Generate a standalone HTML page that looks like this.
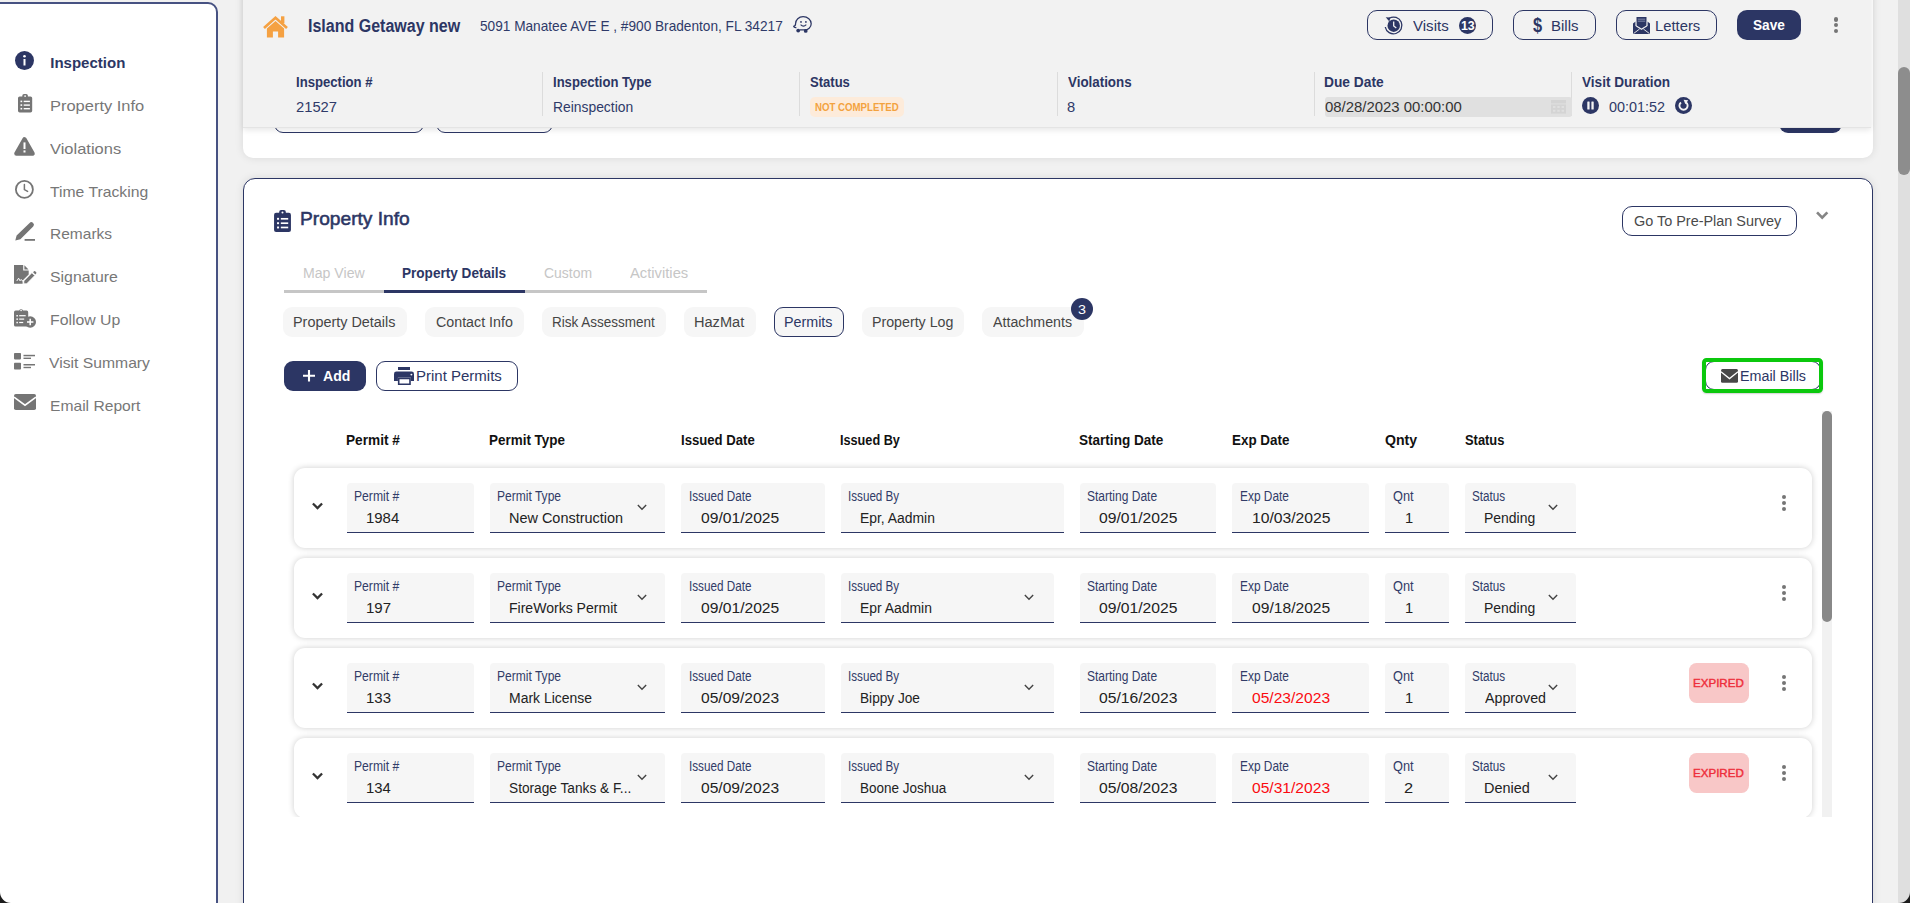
<!DOCTYPE html>
<html><head><meta charset="utf-8"><title>Inspection</title>
<style>
html,body{margin:0;padding:0;}
html{overflow:hidden;}
body{width:1910px;height:903px;overflow:hidden;background:#f1f1f1;font-family:"Liberation Sans",sans-serif;}
#w{position:relative;width:1910px;height:903px;overflow:hidden;background:#f1f1f1;}
.b{position:absolute;box-sizing:border-box;}
.t{position:absolute;white-space:nowrap;transform-origin:0 0;}
svg{overflow:visible;}
</style></head><body><div id="w">
<div class="b" style="left:-2px;top:2px;width:220px;height:910px;background:#fff;border:2px solid #475282;border-top-right-radius:10px;"></div>
<span class="t" style="left:50.29px;top:53px;font-size:15px;line-height:19px;color:#2c3664;font-weight:bold;">Inspection</span>
<span class="t" style="left:50.00px;top:96px;font-size:15px;line-height:19px;color:#777777;transform:scaleX(1.0969);">Property Info</span>
<span class="t" style="left:50.00px;top:139px;font-size:15px;line-height:19px;color:#777777;transform:scaleX(1.0980);">Violations</span>
<span class="t" style="left:50.40px;top:182px;font-size:15px;line-height:19px;color:#777777;transform:scaleX(1.0484);">Time Tracking</span>
<span class="t" style="left:50.04px;top:224px;font-size:15px;line-height:19px;color:#777777;transform:scaleX(1.0344);">Remarks</span>
<span class="t" style="left:49.93px;top:267px;font-size:15px;line-height:19px;color:#777777;transform:scaleX(1.0580);">Signature</span>
<span class="t" style="left:50.14px;top:310px;font-size:15px;line-height:19px;color:#777777;transform:scaleX(1.0543);">Follow Up</span>
<span class="t" style="left:49.00px;top:353px;font-size:15px;line-height:19px;color:#777777;transform:scaleX(1.0472);">Visit Summary</span>
<span class="t" style="left:50.08px;top:396px;font-size:15px;line-height:19px;color:#777777;transform:scaleX(1.0421);">Email Report</span>
<svg class="b" style="left:15.2px;top:50.8px;" width="19" height="19" viewBox="0 0 19 19" ><circle cx="9.5" cy="9.5" r="9.5" fill="#2c3664"/><rect x="8.5" y="8" width="2" height="6.5" fill="#fff"/><circle cx="9.5" cy="5.2" r="1.3" fill="#fff"/></svg>
<svg class="b" style="left:18px;top:94.3px;" width="14.2" height="18.5" viewBox="0 0 14.2 18.5" ><rect x="0" y="2.400" width="14.2" height="16.100" rx="1.700" fill="#757575"/><rect x="4.300" y="0" width="5.600" height="4.600" rx="1.700" fill="#757575"/><circle cx="7.100" cy="2.100" r=".85" fill="#fff"/><g fill="#fff"><rect x="2.500" y="6.600" width="1.700" height="1.600"/><rect x="5.700" y="6.700" width="6.200" height="1.400"/><rect x="2.500" y="10.300" width="1.700" height="1.600"/><rect x="5.700" y="10.400" width="6.200" height="1.400"/><rect x="2.500" y="13.900" width="1.700" height="1.600"/><rect x="5.700" y="14.000" width="6.200" height="1.400"/></g></svg>
<svg class="b" style="left:14.1px;top:137px;" width="21" height="18.8" viewBox="0 0 21 18.8" ><path d="M10.5 2.300L18.600 16.500H2.400Z" fill="#757575" stroke="#757575" stroke-width="4.400" stroke-linejoin="round"/><rect x="9.500" y="5.400" width="2" height="6.600" fill="#fff"/><rect x="9.500" y="13.400" width="2" height="2.100" fill="#fff"/></svg>
<svg class="b" style="left:15.1px;top:180px;" width="18.8" height="18.8" viewBox="0 0 18.8 18.8" ><circle cx="9.4" cy="9.4" r="8.5" fill="none" stroke="#757575" stroke-width="1.8"/><path d="M9.4 4.4V9.6L12.6 11.4" fill="none" stroke="#757575" stroke-width="1.5" stroke-linecap="round"/></svg>
<svg class="b" style="left:15px;top:222px;" width="20" height="19" viewBox="0 0 20 19" ><path d="M0.3 18.6 L1.6 13.4 L14.6 0.9 A2.3 2.3 0 0 1 17.9 0.8 L18.3 1.2 A2.3 2.3 0 0 1 18.2 4.4 L5.4 17.3 Z" fill="#757575"/><rect x="9.6" y="17" width="10.4" height="1.8" fill="#757575"/></svg>
<svg class="b" style="left:14px;top:265px;" width="21.5" height="18.8" viewBox="0 0 21.5 18.8" ><path d="M0 0H9.200V5.600H14.700V9.400L8.600 15.500V18.800H0Z" fill="#757575"/><path d="M10.4 0.300L14.500 4.400H10.400Z" fill="#757575"/><path d="M9.800 15.900L17.900 7.700L20.800 10.600L12.700 18.800H9.800Z" fill="#757575" stroke="#fff" stroke-width=".8"/><path d="M19.100 7.200L20.000 6.300A0.900 0.900 0 0 1 21.200 6.300L22.200 7.300A0.900 0.900 0 0 1 22.200 8.500L21.300 9.400Z" fill="#757575"/><path d="M2.800 16.000L4.600 13.200L6.000 15.800L7.200 14.400L8.200 15.800H9.800" fill="none" stroke="#fff" stroke-width="1"/></svg>
<svg class="b" style="left:14px;top:308px;" width="22" height="20" viewBox="0 0 22 20" ><path d="M1.6 2.6h3.6a2 2 0 0 1 3.800 0H12.600a1.600 1.600 0 0 1 1.600 1.600V16.900a1.600 1.600 0 0 1-1.600 1.600H1.600A1.600 1.600 0 0 1 0 16.900V4.200A1.600 1.600 0 0 1 1.600 2.600z" fill="#757575"/><circle cx="7.100" cy="2.500" r=".8" fill="#fff"/><g fill="#fff"><rect x="2.400" y="7" width="1.500" height="1.500"/><rect x="5.200" y="7.100" width="6.500" height="1.200"/><rect x="2.400" y="10.400" width="1.500" height="1.500"/><rect x="5.200" y="10.500" width="5" height="1.200"/><rect x="2.400" y="13.800" width="1.500" height="1.500"/><rect x="5.200" y="13.900" width="4" height="1.200"/></g><circle cx="16.200" cy="14.000" r="5.800" fill="#757575" stroke="#fff" stroke-width="0"/><path d="M16.200 10.800V17.200M13.000 14.000H19.400" stroke="#fff" stroke-width="1.500"/></svg>
<svg class="b" style="left:14px;top:353.2px;" width="21" height="16.6" viewBox="0 0 21 16.6" ><g fill="#757575"><rect x="0" y="0" width="7" height="6.400" rx=".8"/><rect x="0" y="9.800" width="7" height="6.800" rx=".8"/><rect x="9.500" y="1.800" width="11.500" height="1.500"/><rect x="9.500" y="4.600" width="7.500" height="1.400"/><rect x="9.500" y="11.000" width="11.500" height="1.500"/><rect x="9.500" y="13.800" width="7.500" height="1.400"/></g></svg>
<svg class="b" style="left:14px;top:394px;" width="22" height="16" viewBox="0 0 22 16" ><rect x="0" y="0" width="22" height="16" rx="1.8" fill="#757575"/><path d="M0 3.200L11 11.200L22 3.200" fill="none" stroke="#fff" stroke-width="1.600"/></svg>
<div class="b" style="left:243px;top:-10px;width:1630px;height:168px;background:#fff;border-radius:0 0 10px 10px;box-shadow:0 0 8px rgba(0,0,0,.10);"></div>
<div class="b" style="left:274px;top:102px;width:149.6px;height:30.6px;border:1px solid #2c3664;border-radius:9px;background:#fff;"></div>
<div class="b" style="left:436px;top:102px;width:117.4px;height:30.6px;border:1px solid #2c3664;border-radius:9px;background:#fff;"></div>
<div class="b" style="left:1779px;top:102px;width:63px;height:30.6px;border-radius:9px;background:#2c3664;"></div>
<div class="b" style="left:243px;top:-10px;width:1628px;height:138px;background:#f2f2f2;border-bottom:1px solid #e4e4e4;box-shadow:0 2px 6px rgba(0,0,0,.10);"></div>
<svg class="b" style="left:263px;top:15.6px;" width="25" height="21.4" viewBox="0 0 25 21.4" ><path d="M1.000 11.900L12.500 1.700L24.000 11.900" fill="none" stroke="#f5a142" stroke-width="2.700"/><rect x="18.000" y="0.300" width="3.400" height="7.000" fill="#f5a142"/><path d="M12.500 5.000L3.900 12.600V21.400H9.900V15.400H15.100V21.400H21.100V12.600Z" fill="#f5a142"/></svg>
<span class="t" style="left:307.65px;top:15px;font-size:18px;line-height:22px;color:#2c3664;font-weight:bold;transform:scaleX(0.8897);">Island Getaway new</span>
<span class="t" style="left:480.19px;top:16px;font-size:15px;line-height:19px;color:#2f3a69;transform:scaleX(0.9098);">5091 Manatee AVE E , #900 Bradenton, FL 34217</span>
<svg class="b" style="left:793px;top:16px;" width="19" height="17" viewBox="0 0 19 17" ><path d="M3.4 11.600C1.400 11.800 .800 10.900 .700 10.400C2.300 10.200 2.600 9.000 2.600 7.600C2.600 3.700 5.800 .700 10.100 .700C14.600 .700 18.200 3.800 18.200 7.700C18.200 11.400 15.000 13.900 11.600 13.900L6.600 13.800" fill="none" stroke="#2c3664" stroke-width="1.250"/><circle cx="5.200" cy="14.600" r="1.900" fill="#2c3664"/><circle cx="12.700" cy="14.900" r="1.900" fill="#2c3664"/><circle cx="8.000" cy="5.900" r=".9" fill="#2c3664"/><circle cx="12.900" cy="5.900" r=".9" fill="#2c3664"/><path d="M7.600 8.700Q10.400 11.400 13.300 8.700" fill="none" stroke="#2c3664" stroke-width="1.100"/></svg>
<div class="b" style="left:1367px;top:10px;width:126px;height:29.6px;border:1px solid #2c3664;border-radius:10px;"></div>
<svg class="b" style="left:1384px;top:15.5px;" width="19" height="19" viewBox="0 0 19 19" ><path d="M5.300 2.200A8.400 8.400 0 1 1 1.250 11.000" fill="none" stroke="#2c3664" stroke-width="1.300"/><path d="M1.700 1.200L6.400 1.500L5.400 5.500Z" fill="#2c3664"/><circle cx="9.700" cy="9.700" r="6.250" fill="#2c3664"/><path d="M9.700 5.600V9.900L12.300 11.900" fill="none" stroke="#f2f2f2" stroke-width="1.300"/></svg>
<span class="t" style="left:1413.40px;top:16px;font-size:15.5px;line-height:19px;color:#2c3664;transform:scaleX(0.9709);">Visits</span>
<div class="b" style="left:1459px;top:17px;width:17px;height:17px;border-radius:50%;background:#2c3664;"></div>
<span class="t" style="left:1461.06px;top:18px;font-size:12px;line-height:16px;color:#fff;font-weight:bold;transform:scaleX(1.0291);">13</span>
<div class="b" style="left:1513px;top:10px;width:83px;height:29.6px;border:1px solid #2c3664;border-radius:10px;"></div>
<span class="t" style="left:1533.30px;top:13px;font-size:19.5px;line-height:24px;color:#2c3664;font-weight:bold;transform:scaleX(0.8408);">$</span>
<span class="t" style="left:1551.14px;top:16px;font-size:15.5px;line-height:19px;color:#2c3664;transform:scaleX(0.9677);">Bills</span>
<div class="b" style="left:1616px;top:10px;width:100.6px;height:29.6px;border:1px solid #2c3664;border-radius:10px;"></div>
<svg class="b" style="left:1633px;top:17px;" width="17" height="17" viewBox="0 0 17 17" ><path d="M0 6.600L2.600 4.600V9.000L8.500 12.700L14.400 9.000V4.600L17 6.600V17H0Z" fill="#2c3664"/><path d="M3.500 0H13.500V8.500L8.500 11.600L3.500 8.500Z" fill="#2c3664"/><rect x="4.800" y="1.700" width="7.400" height=".9" fill="#8d94b3"/><rect x="4.800" y="3.700" width="7.400" height=".9" fill="#8d94b3"/><path d="M0.500 16.600L6.600 12.000M16.500 16.600L10.400 12.000" stroke="#f2f2f2" stroke-width=".9"/><path d="M2.900 4.400V9.000L8.500 12.500L14.100 9.000V4.400" fill="none" stroke="#f2f2f2" stroke-width=".55"/></svg>
<span class="t" style="left:1655.11px;top:16px;font-size:15.5px;line-height:19px;color:#2c3664;transform:scaleX(0.9544);">Letters</span>
<div class="b" style="left:1737px;top:10px;width:64px;height:29.6px;border-radius:10px;background:#2c3664;"></div>
<span class="t" style="left:1752.53px;top:15px;font-size:15.5px;line-height:19px;color:#fff;font-weight:bold;transform:scaleX(0.8803);">Save</span>
<div class="b" style="left:1833.7px;top:17.1px;width:4.6px;height:4.6px;border-radius:50%;background:#757575;"></div>
<div class="b" style="left:1833.7px;top:22.9px;width:4.6px;height:4.6px;border-radius:50%;background:#757575;"></div>
<div class="b" style="left:1833.7px;top:28.7px;width:4.6px;height:4.6px;border-radius:50%;background:#757575;"></div>
<div class="b" style="left:542px;top:72.4px;width:1px;height:44px;background:#dcdcdc;"></div>
<div class="b" style="left:799px;top:72.4px;width:1px;height:44px;background:#dcdcdc;"></div>
<div class="b" style="left:1057px;top:72.4px;width:1px;height:44px;background:#dcdcdc;"></div>
<div class="b" style="left:1314px;top:72.4px;width:1px;height:44px;background:#dcdcdc;"></div>
<div class="b" style="left:1571px;top:72.4px;width:1px;height:44px;background:#dcdcdc;"></div>
<span class="t" style="left:295.54px;top:73px;font-size:14.5px;line-height:18px;color:#2c3664;font-weight:bold;transform:scaleX(0.9049);">Inspection #</span>
<span class="t" style="left:295.68px;top:98px;font-size:14.5px;line-height:18px;color:#2f3a69;transform:scaleX(1.0176);">21527</span>
<span class="t" style="left:553.13px;top:73px;font-size:14.5px;line-height:18px;color:#2c3664;font-weight:bold;transform:scaleX(0.9018);">Inspection Type</span>
<span class="t" style="left:552.91px;top:98px;font-size:14.5px;line-height:18px;color:#2f3a69;transform:scaleX(0.9560);">Reinspection</span>
<span class="t" style="left:809.93px;top:73px;font-size:14.5px;line-height:18px;color:#2c3664;font-weight:bold;transform:scaleX(0.8998);">Status</span>
<div class="b" style="left:810px;top:97.4px;width:94px;height:19.2px;border-radius:5px;background:#fdebda;"></div>
<span class="t" style="left:814.53px;top:101px;font-size:10px;line-height:13px;color:#f3a23e;font-weight:bold;transform:scaleX(0.9655);">NOT COMPLETED</span>
<span class="t" style="left:1067.60px;top:73px;font-size:14.5px;line-height:18px;color:#2c3664;font-weight:bold;transform:scaleX(0.9215);">Violations</span>
<span class="t" style="left:1067.28px;top:98px;font-size:14.5px;line-height:18px;color:#2f3a69;transform:scaleX(1.0134);">8</span>
<span class="t" style="left:1323.91px;top:73px;font-size:14.5px;line-height:18px;color:#2c3664;font-weight:bold;transform:scaleX(0.9488);">Due Date</span>
<div class="b" style="left:1325px;top:97.4px;width:246.6px;height:19.2px;background:#e0e0e0;border-radius:3px;"></div>
<span class="t" style="left:1324.94px;top:97px;font-size:15px;line-height:19px;color:#333;transform:scaleX(0.9942);">08/28/2023 00:00:00</span>
<svg class="b" style="left:1551px;top:100px;" width="15" height="13.6" viewBox="0 0 15 13.6" ><g fill="#d4d4d4"><rect x="0" y="0" width="15" height="3.400"/><rect x="0" y="4.400" width="15" height="9.200"/></g><g fill="#e0e0e0"><rect x="2" y="6" width="2.400" height="2"/><rect x="6.300" y="6" width="2.400" height="2"/><rect x="10.600" y="6" width="2.400" height="2"/><rect x="2" y="9.800" width="2.400" height="2"/><rect x="6.300" y="9.800" width="2.400" height="2"/><rect x="10.600" y="9.800" width="2.400" height="2"/></g></svg>
<span class="t" style="left:1582.00px;top:73px;font-size:14.5px;line-height:18px;color:#2c3664;font-weight:bold;transform:scaleX(0.9377);">Visit Duration</span>
<svg class="b" style="left:1582px;top:97px;" width="17" height="17" viewBox="0 0 17 17" ><circle cx="8.500" cy="8.500" r="8.500" fill="#2c3664"/><rect x="5.300" y="4.600" width="2.300" height="7.800" rx=".5" fill="#f2f2f2"/><rect x="9.400" y="4.600" width="2.300" height="7.800" rx=".5" fill="#f2f2f2"/></svg>
<span class="t" style="left:1608.79px;top:98px;font-size:14.5px;line-height:18px;color:#2f3a69;transform:scaleX(0.9918);">00:01:52</span>
<svg class="b" style="left:1675px;top:97px;" width="17" height="17" viewBox="0 0 17 17" ><circle cx="8.500" cy="8.500" r="8.500" fill="#2c3664"/><path d="M10.900 5.300A4.100 4.100 0 1 1 6.000 5.400" fill="none" stroke="#f2f2f2" stroke-width="1.900"/><path d="M8.600 2.700L13.200 3.300L10.400 7.300Z" fill="#f2f2f2"/></svg>
<div class="b" style="left:1898px;top:0px;width:12px;height:903px;background:#dfdfdf;"></div>
<div class="b" style="left:1898px;top:67px;width:12px;height:108px;background:#8d8d8d;border-radius:6px;"></div>
<div class="b" style="left:243px;top:178px;width:1630px;height:760px;background:#fff;border:1px solid #2c3664;border-radius:12px;box-shadow:0 0 8px rgba(0,0,0,.10);"></div>
<svg class="b" style="left:274px;top:210px;" width="17" height="22" viewBox="0 0 14.2 18.5" ><rect x="0" y="2.400" width="14.2" height="16.100" rx="1.700" fill="#2c3664"/><rect x="4.300" y="0" width="5.600" height="4.600" rx="1.700" fill="#2c3664"/><circle cx="7.100" cy="2.100" r=".85" fill="#fff"/><g fill="#fff"><rect x="2.500" y="6.600" width="1.700" height="1.600"/><rect x="5.700" y="6.700" width="6.200" height="1.400"/><rect x="2.500" y="10.300" width="1.700" height="1.600"/><rect x="5.700" y="10.400" width="6.200" height="1.400"/><rect x="2.500" y="13.900" width="1.700" height="1.600"/><rect x="5.700" y="14.000" width="6.200" height="1.400"/></g></svg>
<span class="t" style="left:300.20px;top:207px;font-size:19px;line-height:23px;color:#2c3664;transform:scaleX(1.0085);-webkit-text-stroke:0.55px #2c3664;">Property Info</span>
<div class="b" style="left:1622px;top:205.6px;width:175px;height:30.6px;border:1px solid #2c3664;border-radius:10px;background:#fff;"></div>
<span class="t" style="left:302.91px;top:264px;font-size:14px;line-height:18px;color:#c6c6c6;transform:scaleX(1.0075);">Map View</span>
<span class="t" style="left:402.28px;top:264px;font-size:14px;line-height:18px;color:#2c3664;font-weight:bold;transform:scaleX(0.9694);">Property Details</span>
<span class="t" style="left:544.00px;top:264px;font-size:14px;line-height:18px;color:#c6c6c6;transform:scaleX(0.9963);">Custom</span>
<span class="t" style="left:630.40px;top:264px;font-size:14px;line-height:18px;color:#c6c6c6;transform:scaleX(1.0545);">Activities</span>
<div class="b" style="left:284px;top:290px;width:423px;height:2.6px;background:#c6c6c6;"></div>
<div class="b" style="left:384px;top:289.6px;width:141px;height:3px;background:#2c3664;"></div>
<div class="b" style="left:283px;top:307px;width:124px;height:30px;background:#f6f6f6;border-radius:9px;"></div>
<span class="t" style="left:293.29px;top:313px;font-size:14px;line-height:18px;color:#454545;transform:scaleX(1.0287);">Property Details</span>
<div class="b" style="left:425px;top:307px;width:99px;height:30px;background:#f6f6f6;border-radius:9px;"></div>
<span class="t" style="left:435.95px;top:313px;font-size:14px;line-height:18px;color:#454545;transform:scaleX(1.0176);">Contact Info</span>
<div class="b" style="left:542px;top:307px;width:124px;height:30px;background:#f6f6f6;border-radius:9px;"></div>
<span class="t" style="left:552.26px;top:313px;font-size:14px;line-height:18px;color:#454545;transform:scaleX(0.9634);">Risk Assessment</span>
<div class="b" style="left:684px;top:307px;width:72px;height:30px;background:#f6f6f6;border-radius:9px;"></div>
<span class="t" style="left:694.29px;top:313px;font-size:14px;line-height:18px;color:#454545;transform:scaleX(1.0407);">HazMat</span>
<div class="b" style="left:774px;top:307px;width:70px;height:30px;background:#f6f6f6;border-radius:9px;border:1px solid #2c3664;"></div>
<span class="t" style="left:784.16px;top:313px;font-size:14px;line-height:18px;color:#2c3664;transform:scaleX(1.0221);">Permits</span>
<div class="b" style="left:862px;top:307px;width:102px;height:30px;background:#f6f6f6;border-radius:9px;"></div>
<span class="t" style="left:872.31px;top:313px;font-size:14px;line-height:18px;color:#454545;transform:scaleX(1.0152);">Property Log</span>
<div class="b" style="left:982px;top:307px;width:102px;height:30px;background:#f6f6f6;border-radius:9px;"></div>
<span class="t" style="left:993.41px;top:313px;font-size:14px;line-height:18px;color:#454545;transform:scaleX(1.0151);">Attachments</span>
<div class="b" style="left:1071px;top:298px;width:22px;height:22px;border-radius:50%;background:#2c3664;"></div>
<span class="t" style="left:1077.87px;top:301px;font-size:13px;line-height:17px;color:#fff;transform:scaleX(1.1036);">3</span>
<div class="b" style="left:284px;top:361px;width:82px;height:30px;background:#2c3664;border-radius:9px;"></div>
<svg class="b" style="left:303px;top:370px;" width="12" height="11.6" viewBox="0 0 12 11.6" ><path d="M6 0V11.600M0 5.800H12" stroke="#fff" stroke-width="2.100"/></svg>
<span class="t" style="left:322.74px;top:366px;font-size:15.5px;line-height:19px;color:#fff;font-weight:bold;transform:scaleX(0.9066);">Add</span>
<div class="b" style="left:376px;top:361px;width:142px;height:30px;background:#fff;border:1px solid #2c3664;border-radius:9px;"></div>
<svg class="b" style="left:394px;top:367px;" width="20" height="18" viewBox="0 0 20 18" ><rect x="4.000" y="0" width="12.000" height="3.000" fill="#2c3664"/><path d="M2.400 4.500H17.600A2.400 2.400 0 0 1 20 6.900V14.000H16.800V10.600H3.900V14.000H0V6.900A2.400 2.400 0 0 1 2.400 4.500Z" fill="#2c3664"/><path d="M4.700 11.400H16.000V17.200H4.700Z" fill="none" stroke="#2c3664" stroke-width="1.600"/><circle cx="17.400" cy="7.600" r=".95" fill="#fff"/></svg>
<span class="t" style="left:416.29px;top:366px;font-size:15.5px;line-height:19px;color:#2c3664;transform:scaleX(0.9673);">Print Permits</span>
<span class="t" style="left:1634.28px;top:211px;font-size:15.5px;line-height:19px;color:#4a4a4a;transform:scaleX(0.9303);">Go To Pre-Plan Survey</span>
<svg class="b" style="left:1816px;top:211px;" width="12.4" height="8" viewBox="0 0 12 7.4" ><path d="M1 1.200L6 6.200L11 1.200" fill="none" stroke="#858585" stroke-width="2.6" stroke-linecap="butt" stroke-linejoin="miter"/></svg>
<div class="b" style="left:1705px;top:361px;width:115.5px;height:29px;background:#fff;border:1px solid #2c3664;border-radius:9px;"></div>
<div class="b" style="left:1702.2px;top:358.2px;width:120.6px;height:34.5px;border:4px solid #0bc80d;border-radius:4.500px;box-shadow:0 1px 1.500px rgba(0,0,0,.18);"></div>
<svg class="b" style="left:1721px;top:369px;" width="17" height="13.8" viewBox="0 0 22 16" preserveAspectRatio="none"><rect x="0" y="0" width="22" height="16" rx="1.8" fill="#484848"/><path d="M0 3.200L11 11.200L22 3.200" fill="none" stroke="#fff" stroke-width="1.600"/></svg>
<span class="t" style="left:1739.85px;top:366px;font-size:15.5px;line-height:19px;color:#2c3664;transform:scaleX(0.9229);">Email Bills</span>
<div class="b" style="left:1822px;top:411px;width:10px;height:406px;background:#f1f1f1;"></div>
<div class="b" style="left:1822px;top:411px;width:10px;height:211px;background:#888;border-radius:5px;"></div>
<span class="t" style="left:346.26px;top:431px;font-size:14px;line-height:18px;color:#111;font-weight:bold;transform:scaleX(0.9755);">Permit #</span>
<span class="t" style="left:489.30px;top:431px;font-size:14px;line-height:18px;color:#111;font-weight:bold;transform:scaleX(0.9607);">Permit Type</span>
<span class="t" style="left:681.13px;top:431px;font-size:14px;line-height:18px;color:#111;font-weight:bold;transform:scaleX(0.9388);">Issued Date</span>
<span class="t" style="left:839.77px;top:431px;font-size:14px;line-height:18px;color:#111;font-weight:bold;transform:scaleX(0.9056);">Issued By</span>
<span class="t" style="left:1078.93px;top:431px;font-size:14px;line-height:18px;color:#111;font-weight:bold;transform:scaleX(0.9676);">Starting Date</span>
<span class="t" style="left:1231.64px;top:431px;font-size:14px;line-height:18px;color:#111;font-weight:bold;transform:scaleX(0.9578);">Exp Date</span>
<span class="t" style="left:1385.17px;top:431px;font-size:14px;line-height:18px;color:#111;font-weight:bold;transform:scaleX(1.0092);">Qnty</span>
<span class="t" style="left:1464.61px;top:431px;font-size:14px;line-height:18px;color:#111;font-weight:bold;transform:scaleX(0.9199);">Status</span>
<div class="b" style="left:284px;top:411px;width:1538px;height:406px;overflow:hidden;">
<div class="b" style="left:10px;top:57px;width:1518px;height:80px;background:#fff;border-radius:11px;box-shadow:0 0 6px rgba(0,0,0,.2);"></div>
<svg class="b" style="left:28px;top:91.4px;" width="11" height="7.6" viewBox="0 0 12 7.4" ><path d="M1 1.200L6 6.200L11 1.200" fill="none" stroke="#333" stroke-width="2.5" stroke-linecap="butt" stroke-linejoin="miter"/></svg>
<div class="b" style="left:63px;top:72px;width:127px;height:50px;background:#f6f6f6;border-radius:4px 4px 0 0;border-bottom:1.500px solid #2c3664;"></div>
<div class="b" style="left:206px;top:72px;width:175px;height:50px;background:#f6f6f6;border-radius:4px 4px 0 0;border-bottom:1.500px solid #2c3664;"></div>
<div class="b" style="left:397px;top:72px;width:144px;height:50px;background:#f6f6f6;border-radius:4px 4px 0 0;border-bottom:1.500px solid #2c3664;"></div>
<div class="b" style="left:557px;top:72px;width:223px;height:50px;background:#f6f6f6;border-radius:4px 4px 0 0;border-bottom:1.500px solid #2c3664;"></div>
<div class="b" style="left:796px;top:72px;width:136px;height:50px;background:#f6f6f6;border-radius:4px 4px 0 0;border-bottom:1.500px solid #2c3664;"></div>
<div class="b" style="left:948px;top:72px;width:137px;height:50px;background:#f6f6f6;border-radius:4px 4px 0 0;border-bottom:1.500px solid #2c3664;"></div>
<div class="b" style="left:1101px;top:72px;width:64px;height:50px;background:#f6f6f6;border-radius:4px 4px 0 0;border-bottom:1.500px solid #2c3664;"></div>
<div class="b" style="left:1181px;top:72px;width:111px;height:50px;background:#f6f6f6;border-radius:4px 4px 0 0;border-bottom:1.500px solid #2c3664;"></div>
<span class="t" style="left:69.70px;top:76px;font-size:14px;line-height:18px;color:#323c68;transform:scaleX(0.8680);">Permit #</span>
<span class="t" style="left:213.33px;top:76px;font-size:14px;line-height:18px;color:#323c68;transform:scaleX(0.8601);">Permit Type</span>
<span class="t" style="left:404.65px;top:76px;font-size:14px;line-height:18px;color:#323c68;transform:scaleX(0.8368);">Issued Date</span>
<span class="t" style="left:564.21px;top:76px;font-size:14px;line-height:18px;color:#323c68;transform:scaleX(0.8325);">Issued By</span>
<span class="t" style="left:803.40px;top:76px;font-size:14px;line-height:18px;color:#323c68;transform:scaleX(0.8581);">Starting Date</span>
<span class="t" style="left:956.01px;top:76px;font-size:14px;line-height:18px;color:#323c68;transform:scaleX(0.8496);">Exp Date</span>
<span class="t" style="left:1109.08px;top:76px;font-size:14px;line-height:18px;color:#323c68;transform:scaleX(0.9117);">Qnt</span>
<span class="t" style="left:1187.99px;top:76px;font-size:14px;line-height:18px;color:#323c68;transform:scaleX(0.8347);">Status</span>
<span class="t" style="left:82.44px;top:97px;font-size:15.5px;line-height:19px;color:#222;transform:scaleX(0.9628);">1984</span>
<span class="t" style="left:225.45px;top:97px;font-size:15.5px;line-height:19px;color:#222;transform:scaleX(0.9324);">New Construction</span>
<span class="t" style="left:417.35px;top:97px;font-size:15.5px;line-height:19px;color:#222;transform:scaleX(1.0088);">09/01/2025</span>
<span class="t" style="left:576.18px;top:97px;font-size:15.5px;line-height:19px;color:#222;transform:scaleX(0.8962);">Epr, Aadmin</span>
<span class="t" style="left:814.93px;top:97px;font-size:15.5px;line-height:19px;color:#222;transform:scaleX(1.0110);">09/01/2025</span>
<span class="t" style="left:967.88px;top:97px;font-size:15.5px;line-height:19px;color:#222;transform:scaleX(1.0123);">10/03/2025</span>
<span class="t" style="left:1120.93px;top:97px;font-size:15.5px;line-height:19px;color:#222;transform:scaleX(0.9474);">1</span>
<span class="t" style="left:1200.44px;top:97px;font-size:15.5px;line-height:19px;color:#222;transform:scaleX(0.8996);">Pending</span>
<svg class="b" style="left:353px;top:93px;" width="10" height="6.4" viewBox="0 0 12 7.4" ><path d="M1 1.200L6 6.200L11 1.200" fill="none" stroke="#444" stroke-width="1.7" stroke-linecap="butt" stroke-linejoin="miter"/></svg>
<svg class="b" style="left:1264px;top:93px;" width="10" height="6.4" viewBox="0 0 12 7.4" ><path d="M1 1.200L6 6.200L11 1.200" fill="none" stroke="#444" stroke-width="1.7" stroke-linecap="butt" stroke-linejoin="miter"/></svg>
<div class="b" style="left:1497.8px;top:83.8px;width:4.4px;height:4.4px;border-radius:50%;background:#757575;"></div>
<div class="b" style="left:1497.8px;top:89.8px;width:4.4px;height:4.4px;border-radius:50%;background:#757575;"></div>
<div class="b" style="left:1497.8px;top:95.8px;width:4.4px;height:4.4px;border-radius:50%;background:#757575;"></div>
<div class="b" style="left:10px;top:147px;width:1518px;height:80px;background:#fff;border-radius:11px;box-shadow:0 0 6px rgba(0,0,0,.2);"></div>
<svg class="b" style="left:28px;top:181.4px;" width="11" height="7.6" viewBox="0 0 12 7.4" ><path d="M1 1.200L6 6.200L11 1.200" fill="none" stroke="#333" stroke-width="2.5" stroke-linecap="butt" stroke-linejoin="miter"/></svg>
<div class="b" style="left:63px;top:162px;width:127px;height:50px;background:#f6f6f6;border-radius:4px 4px 0 0;border-bottom:1.500px solid #2c3664;"></div>
<div class="b" style="left:206px;top:162px;width:175px;height:50px;background:#f6f6f6;border-radius:4px 4px 0 0;border-bottom:1.500px solid #2c3664;"></div>
<div class="b" style="left:397px;top:162px;width:144px;height:50px;background:#f6f6f6;border-radius:4px 4px 0 0;border-bottom:1.500px solid #2c3664;"></div>
<div class="b" style="left:557px;top:162px;width:213px;height:50px;background:#f6f6f6;border-radius:4px 4px 0 0;border-bottom:1.500px solid #2c3664;"></div>
<div class="b" style="left:796px;top:162px;width:136px;height:50px;background:#f6f6f6;border-radius:4px 4px 0 0;border-bottom:1.500px solid #2c3664;"></div>
<div class="b" style="left:948px;top:162px;width:137px;height:50px;background:#f6f6f6;border-radius:4px 4px 0 0;border-bottom:1.500px solid #2c3664;"></div>
<div class="b" style="left:1101px;top:162px;width:64px;height:50px;background:#f6f6f6;border-radius:4px 4px 0 0;border-bottom:1.500px solid #2c3664;"></div>
<div class="b" style="left:1181px;top:162px;width:111px;height:50px;background:#f6f6f6;border-radius:4px 4px 0 0;border-bottom:1.500px solid #2c3664;"></div>
<span class="t" style="left:69.70px;top:166px;font-size:14px;line-height:18px;color:#323c68;transform:scaleX(0.8680);">Permit #</span>
<span class="t" style="left:213.33px;top:166px;font-size:14px;line-height:18px;color:#323c68;transform:scaleX(0.8601);">Permit Type</span>
<span class="t" style="left:404.65px;top:166px;font-size:14px;line-height:18px;color:#323c68;transform:scaleX(0.8368);">Issued Date</span>
<span class="t" style="left:564.21px;top:166px;font-size:14px;line-height:18px;color:#323c68;transform:scaleX(0.8325);">Issued By</span>
<span class="t" style="left:803.40px;top:166px;font-size:14px;line-height:18px;color:#323c68;transform:scaleX(0.8581);">Starting Date</span>
<span class="t" style="left:956.01px;top:166px;font-size:14px;line-height:18px;color:#323c68;transform:scaleX(0.8496);">Exp Date</span>
<span class="t" style="left:1109.08px;top:166px;font-size:14px;line-height:18px;color:#323c68;transform:scaleX(0.9117);">Qnt</span>
<span class="t" style="left:1187.99px;top:166px;font-size:14px;line-height:18px;color:#323c68;transform:scaleX(0.8347);">Status</span>
<span class="t" style="left:81.96px;top:187px;font-size:15.5px;line-height:19px;color:#222;transform:scaleX(0.9684);">197</span>
<span class="t" style="left:225.46px;top:187px;font-size:15.5px;line-height:19px;color:#222;transform:scaleX(0.9059);">FireWorks Permit</span>
<span class="t" style="left:417.35px;top:187px;font-size:15.5px;line-height:19px;color:#222;transform:scaleX(1.0088);">09/01/2025</span>
<span class="t" style="left:576.31px;top:187px;font-size:15.5px;line-height:19px;color:#222;transform:scaleX(0.8980);">Epr Aadmin</span>
<span class="t" style="left:814.93px;top:187px;font-size:15.5px;line-height:19px;color:#222;transform:scaleX(1.0110);">09/01/2025</span>
<span class="t" style="left:968.35px;top:187px;font-size:15.5px;line-height:19px;color:#222;transform:scaleX(1.0088);">09/18/2025</span>
<span class="t" style="left:1120.93px;top:187px;font-size:15.5px;line-height:19px;color:#222;transform:scaleX(0.9474);">1</span>
<span class="t" style="left:1200.44px;top:187px;font-size:15.5px;line-height:19px;color:#222;transform:scaleX(0.8996);">Pending</span>
<svg class="b" style="left:353px;top:183px;" width="10" height="6.4" viewBox="0 0 12 7.4" ><path d="M1 1.200L6 6.200L11 1.200" fill="none" stroke="#444" stroke-width="1.7" stroke-linecap="butt" stroke-linejoin="miter"/></svg>
<svg class="b" style="left:1264px;top:183px;" width="10" height="6.4" viewBox="0 0 12 7.4" ><path d="M1 1.200L6 6.200L11 1.200" fill="none" stroke="#444" stroke-width="1.7" stroke-linecap="butt" stroke-linejoin="miter"/></svg>
<svg class="b" style="left:740px;top:183px;" width="10" height="6.4" viewBox="0 0 12 7.4" ><path d="M1 1.200L6 6.200L11 1.200" fill="none" stroke="#444" stroke-width="1.7" stroke-linecap="butt" stroke-linejoin="miter"/></svg>
<div class="b" style="left:1497.8px;top:173.8px;width:4.4px;height:4.4px;border-radius:50%;background:#757575;"></div>
<div class="b" style="left:1497.8px;top:179.8px;width:4.4px;height:4.4px;border-radius:50%;background:#757575;"></div>
<div class="b" style="left:1497.8px;top:185.8px;width:4.4px;height:4.4px;border-radius:50%;background:#757575;"></div>
<div class="b" style="left:10px;top:237px;width:1518px;height:80px;background:#fff;border-radius:11px;box-shadow:0 0 6px rgba(0,0,0,.2);"></div>
<svg class="b" style="left:28px;top:271.4px;" width="11" height="7.6" viewBox="0 0 12 7.4" ><path d="M1 1.200L6 6.200L11 1.200" fill="none" stroke="#333" stroke-width="2.5" stroke-linecap="butt" stroke-linejoin="miter"/></svg>
<div class="b" style="left:63px;top:252px;width:127px;height:50px;background:#f6f6f6;border-radius:4px 4px 0 0;border-bottom:1.500px solid #2c3664;"></div>
<div class="b" style="left:206px;top:252px;width:175px;height:50px;background:#f6f6f6;border-radius:4px 4px 0 0;border-bottom:1.500px solid #2c3664;"></div>
<div class="b" style="left:397px;top:252px;width:144px;height:50px;background:#f6f6f6;border-radius:4px 4px 0 0;border-bottom:1.500px solid #2c3664;"></div>
<div class="b" style="left:557px;top:252px;width:213px;height:50px;background:#f6f6f6;border-radius:4px 4px 0 0;border-bottom:1.500px solid #2c3664;"></div>
<div class="b" style="left:796px;top:252px;width:136px;height:50px;background:#f6f6f6;border-radius:4px 4px 0 0;border-bottom:1.500px solid #2c3664;"></div>
<div class="b" style="left:948px;top:252px;width:137px;height:50px;background:#f6f6f6;border-radius:4px 4px 0 0;border-bottom:1.500px solid #2c3664;"></div>
<div class="b" style="left:1101px;top:252px;width:64px;height:50px;background:#f6f6f6;border-radius:4px 4px 0 0;border-bottom:1.500px solid #2c3664;"></div>
<div class="b" style="left:1181px;top:252px;width:111px;height:50px;background:#f6f6f6;border-radius:4px 4px 0 0;border-bottom:1.500px solid #2c3664;"></div>
<span class="t" style="left:69.70px;top:256px;font-size:14px;line-height:18px;color:#323c68;transform:scaleX(0.8680);">Permit #</span>
<span class="t" style="left:213.33px;top:256px;font-size:14px;line-height:18px;color:#323c68;transform:scaleX(0.8601);">Permit Type</span>
<span class="t" style="left:404.65px;top:256px;font-size:14px;line-height:18px;color:#323c68;transform:scaleX(0.8368);">Issued Date</span>
<span class="t" style="left:564.21px;top:256px;font-size:14px;line-height:18px;color:#323c68;transform:scaleX(0.8325);">Issued By</span>
<span class="t" style="left:803.40px;top:256px;font-size:14px;line-height:18px;color:#323c68;transform:scaleX(0.8581);">Starting Date</span>
<span class="t" style="left:956.01px;top:256px;font-size:14px;line-height:18px;color:#323c68;transform:scaleX(0.8496);">Exp Date</span>
<span class="t" style="left:1109.08px;top:256px;font-size:14px;line-height:18px;color:#323c68;transform:scaleX(0.9117);">Qnt</span>
<span class="t" style="left:1187.99px;top:256px;font-size:14px;line-height:18px;color:#323c68;transform:scaleX(0.8347);">Status</span>
<span class="t" style="left:81.97px;top:277px;font-size:15.5px;line-height:19px;color:#222;transform:scaleX(0.9663);">133</span>
<span class="t" style="left:224.99px;top:277px;font-size:15.5px;line-height:19px;color:#222;transform:scaleX(0.9007);">Mark License</span>
<span class="t" style="left:417.29px;top:277px;font-size:15.5px;line-height:19px;color:#222;transform:scaleX(1.0063);">05/09/2023</span>
<span class="t" style="left:576.06px;top:277px;font-size:15.5px;line-height:19px;color:#222;transform:scaleX(0.8799);">Bippy Joe</span>
<span class="t" style="left:815.21px;top:277px;font-size:15.5px;line-height:19px;color:#222;transform:scaleX(1.0113);">05/16/2023</span>
<span class="t" style="left:968.29px;top:277px;font-size:15.5px;line-height:19px;color:#fb0a10;transform:scaleX(1.0063);">05/23/2023</span>
<span class="t" style="left:1120.93px;top:277px;font-size:15.5px;line-height:19px;color:#222;transform:scaleX(0.9474);">1</span>
<span class="t" style="left:1201.40px;top:277px;font-size:15.5px;line-height:19px;color:#222;transform:scaleX(0.9189);">Approved</span>
<svg class="b" style="left:353px;top:273px;" width="10" height="6.4" viewBox="0 0 12 7.4" ><path d="M1 1.200L6 6.200L11 1.200" fill="none" stroke="#444" stroke-width="1.7" stroke-linecap="butt" stroke-linejoin="miter"/></svg>
<svg class="b" style="left:1264px;top:273px;" width="10" height="6.4" viewBox="0 0 12 7.4" ><path d="M1 1.200L6 6.200L11 1.200" fill="none" stroke="#444" stroke-width="1.7" stroke-linecap="butt" stroke-linejoin="miter"/></svg>
<svg class="b" style="left:740px;top:273px;" width="10" height="6.4" viewBox="0 0 12 7.4" ><path d="M1 1.200L6 6.200L11 1.200" fill="none" stroke="#444" stroke-width="1.7" stroke-linecap="butt" stroke-linejoin="miter"/></svg>
<div class="b" style="left:1405px;top:252.1px;width:60px;height:39.8px;background:#f8c7c7;border-radius:7.500px;"></div>
<span class="t" style="left:1409.23px;top:265px;font-size:10.9px;line-height:14px;color:#ee2d3a;transform:scaleX(1.0618);-webkit-text-stroke:0.4px #ee2d3a;">EXPIRED</span>
<div class="b" style="left:1497.8px;top:263.8px;width:4.4px;height:4.4px;border-radius:50%;background:#757575;"></div>
<div class="b" style="left:1497.8px;top:269.8px;width:4.4px;height:4.4px;border-radius:50%;background:#757575;"></div>
<div class="b" style="left:1497.8px;top:275.8px;width:4.4px;height:4.4px;border-radius:50%;background:#757575;"></div>
<div class="b" style="left:10px;top:327px;width:1518px;height:80px;background:#fff;border-radius:11px;box-shadow:0 0 6px rgba(0,0,0,.2);"></div>
<svg class="b" style="left:28px;top:361.4px;" width="11" height="7.6" viewBox="0 0 12 7.4" ><path d="M1 1.200L6 6.200L11 1.200" fill="none" stroke="#333" stroke-width="2.5" stroke-linecap="butt" stroke-linejoin="miter"/></svg>
<div class="b" style="left:63px;top:342px;width:127px;height:50px;background:#f6f6f6;border-radius:4px 4px 0 0;border-bottom:1.500px solid #2c3664;"></div>
<div class="b" style="left:206px;top:342px;width:175px;height:50px;background:#f6f6f6;border-radius:4px 4px 0 0;border-bottom:1.500px solid #2c3664;"></div>
<div class="b" style="left:397px;top:342px;width:144px;height:50px;background:#f6f6f6;border-radius:4px 4px 0 0;border-bottom:1.500px solid #2c3664;"></div>
<div class="b" style="left:557px;top:342px;width:213px;height:50px;background:#f6f6f6;border-radius:4px 4px 0 0;border-bottom:1.500px solid #2c3664;"></div>
<div class="b" style="left:796px;top:342px;width:136px;height:50px;background:#f6f6f6;border-radius:4px 4px 0 0;border-bottom:1.500px solid #2c3664;"></div>
<div class="b" style="left:948px;top:342px;width:137px;height:50px;background:#f6f6f6;border-radius:4px 4px 0 0;border-bottom:1.500px solid #2c3664;"></div>
<div class="b" style="left:1101px;top:342px;width:64px;height:50px;background:#f6f6f6;border-radius:4px 4px 0 0;border-bottom:1.500px solid #2c3664;"></div>
<div class="b" style="left:1181px;top:342px;width:111px;height:50px;background:#f6f6f6;border-radius:4px 4px 0 0;border-bottom:1.500px solid #2c3664;"></div>
<span class="t" style="left:69.70px;top:346px;font-size:14px;line-height:18px;color:#323c68;transform:scaleX(0.8680);">Permit #</span>
<span class="t" style="left:213.33px;top:346px;font-size:14px;line-height:18px;color:#323c68;transform:scaleX(0.8601);">Permit Type</span>
<span class="t" style="left:404.65px;top:346px;font-size:14px;line-height:18px;color:#323c68;transform:scaleX(0.8368);">Issued Date</span>
<span class="t" style="left:564.21px;top:346px;font-size:14px;line-height:18px;color:#323c68;transform:scaleX(0.8325);">Issued By</span>
<span class="t" style="left:803.40px;top:346px;font-size:14px;line-height:18px;color:#323c68;transform:scaleX(0.8581);">Starting Date</span>
<span class="t" style="left:956.01px;top:346px;font-size:14px;line-height:18px;color:#323c68;transform:scaleX(0.8496);">Exp Date</span>
<span class="t" style="left:1109.08px;top:346px;font-size:14px;line-height:18px;color:#323c68;transform:scaleX(0.9117);">Qnt</span>
<span class="t" style="left:1187.99px;top:346px;font-size:14px;line-height:18px;color:#323c68;transform:scaleX(0.8347);">Status</span>
<span class="t" style="left:82.24px;top:367px;font-size:15.5px;line-height:19px;color:#222;transform:scaleX(0.9556);">134</span>
<span class="t" style="left:224.88px;top:367px;font-size:15.5px;line-height:19px;color:#222;transform:scaleX(0.8832);">Storage Tanks &amp; F...</span>
<span class="t" style="left:417.29px;top:367px;font-size:15.5px;line-height:19px;color:#222;transform:scaleX(1.0063);">05/09/2023</span>
<span class="t" style="left:576.08px;top:367px;font-size:15.5px;line-height:19px;color:#222;transform:scaleX(0.8697);">Boone Joshua</span>
<span class="t" style="left:815.21px;top:367px;font-size:15.5px;line-height:19px;color:#222;transform:scaleX(1.0113);">05/08/2023</span>
<span class="t" style="left:968.29px;top:367px;font-size:15.5px;line-height:19px;color:#fb0a10;transform:scaleX(1.0063);">05/31/2023</span>
<span class="t" style="left:1120.26px;top:367px;font-size:15.5px;line-height:19px;color:#222;transform:scaleX(1.0572);">2</span>
<span class="t" style="left:1200.44px;top:367px;font-size:15.5px;line-height:19px;color:#222;transform:scaleX(0.9319);">Denied</span>
<svg class="b" style="left:353px;top:363px;" width="10" height="6.4" viewBox="0 0 12 7.4" ><path d="M1 1.200L6 6.200L11 1.200" fill="none" stroke="#444" stroke-width="1.7" stroke-linecap="butt" stroke-linejoin="miter"/></svg>
<svg class="b" style="left:1264px;top:363px;" width="10" height="6.4" viewBox="0 0 12 7.4" ><path d="M1 1.200L6 6.200L11 1.200" fill="none" stroke="#444" stroke-width="1.7" stroke-linecap="butt" stroke-linejoin="miter"/></svg>
<svg class="b" style="left:740px;top:363px;" width="10" height="6.4" viewBox="0 0 12 7.4" ><path d="M1 1.200L6 6.200L11 1.200" fill="none" stroke="#444" stroke-width="1.7" stroke-linecap="butt" stroke-linejoin="miter"/></svg>
<div class="b" style="left:1405px;top:342.1px;width:60px;height:39.8px;background:#f8c7c7;border-radius:7.500px;"></div>
<span class="t" style="left:1409.23px;top:355px;font-size:10.9px;line-height:14px;color:#ee2d3a;transform:scaleX(1.0618);-webkit-text-stroke:0.4px #ee2d3a;">EXPIRED</span>
<div class="b" style="left:1497.8px;top:353.8px;width:4.4px;height:4.4px;border-radius:50%;background:#757575;"></div>
<div class="b" style="left:1497.8px;top:359.8px;width:4.4px;height:4.4px;border-radius:50%;background:#757575;"></div>
<div class="b" style="left:1497.8px;top:365.8px;width:4.4px;height:4.4px;border-radius:50%;background:#757575;"></div>
</div>
<svg class="b" style="left:0px;top:892px;" width="11" height="11" viewBox="0 0 10 10" ><path d="M0 0A10 10 0 0 0 10 10H0Z" fill="#1c1c1c"/></svg>
<svg class="b" style="left:1899px;top:892px;" width="11" height="11" viewBox="0 0 10 10" ><path d="M10 0A10 10 0 0 1 0 10H10Z" fill="#1c1c1c"/></svg>
</div></body></html>
